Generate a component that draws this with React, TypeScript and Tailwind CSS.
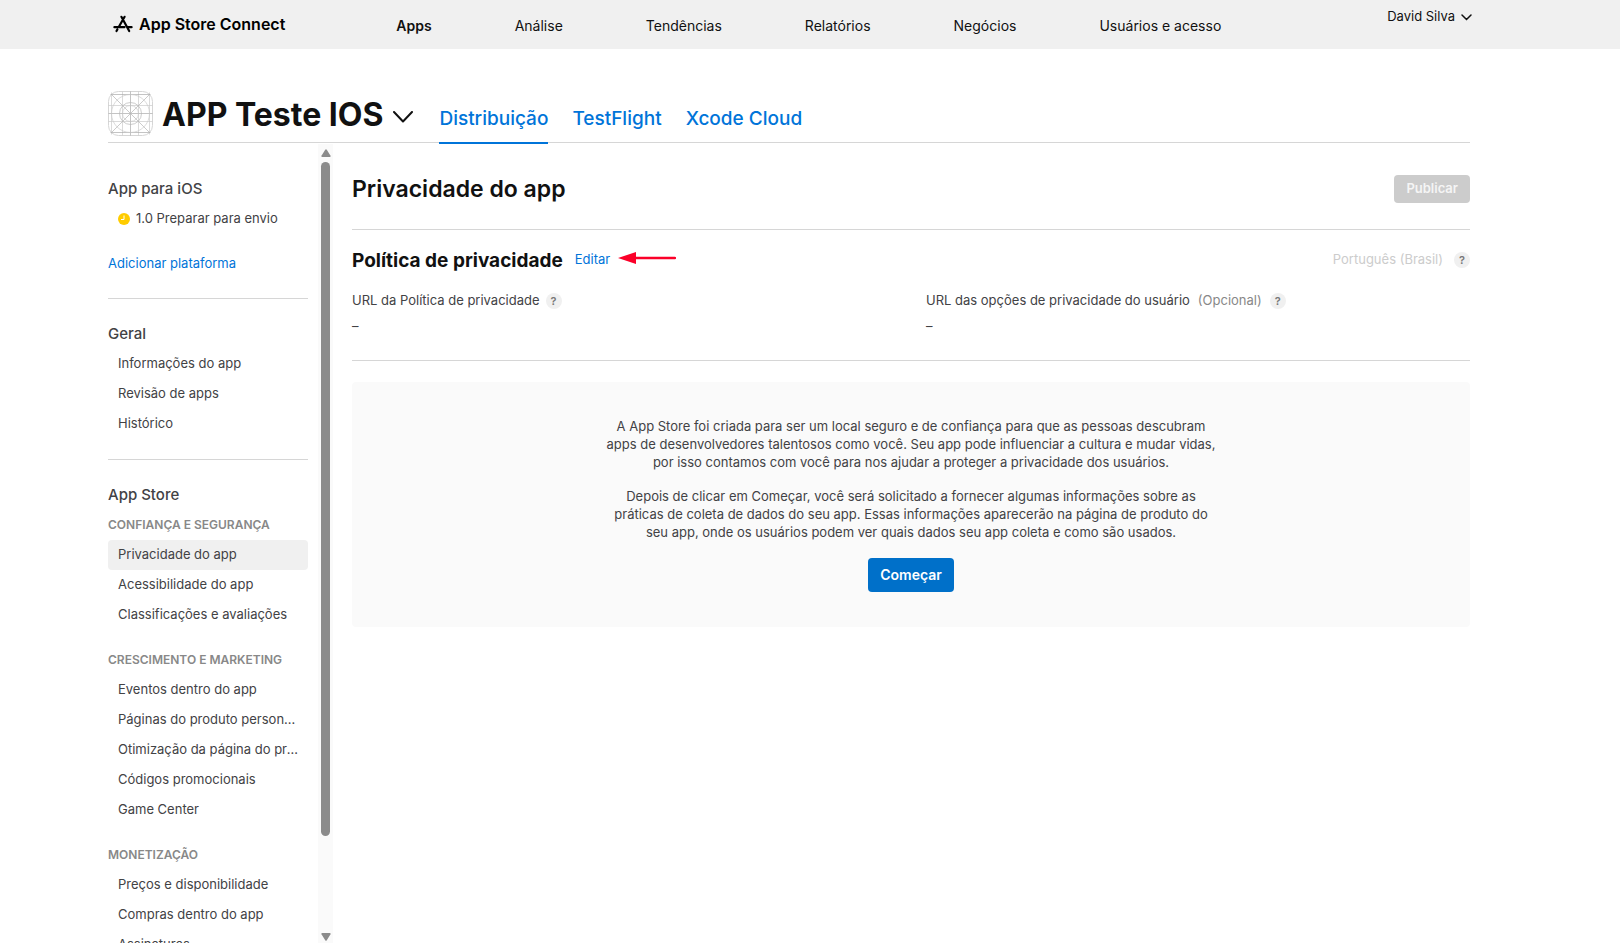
import React, { useState } from "react";

interface NavGroup {
  title: string;
  items: string[];
}

const topLinks = [
  "Apps",
  "Análise",
  "Tendências",
  "Relatórios",
  "Negócios",
  "Usuários e acesso",
];

const tabs = ["Distribuição", "TestFlight", "Xcode Cloud"];

const generalItems = ["Informações do app", "Revisão de apps", "Histórico"];

const storeGroups: NavGroup[] = [
  {
    title: "Confiança e segurança",
    items: [
      "Privacidade do app",
      "Acessibilidade do app",
      "Classificações e avaliações",
    ],
  },
  {
    title: "Crescimento e marketing",
    items: [
      "Eventos dentro do app",
      "Páginas do produto personalizadas",
      "Otimização da página do produto",
      "Códigos promocionais",
      "Game Center",
    ],
  },
  {
    title: "Monetização",
    items: ["Preços e disponibilidade", "Compras dentro do app", "Assinaturas"],
  },
];

const StoreLogo = () => (
  <svg
    viewBox="0 0 20 18"
    className="h-[18px] w-5"
    fill="none"
    stroke="#000"
    strokeWidth="2.2"
    strokeLinecap="round"
  >
    <path d="M11.6 1.8 5.6 12.2M8.4 1.8l7.8 14.2M1.4 12.2h10M15 12.2h3.6M4.4 14.4l-.9 1.6" />
  </svg>
);

const AppIcon = () => (
  <svg
    viewBox="0 0 45 45"
    className="size-[45px]"
    fill="none"
    stroke="#cccccc"
    strokeWidth="0.7"
  >
    <rect x="0.5" y="0.5" width="44" height="44" rx="10" stroke="#d6d6d6" strokeWidth="1" />
    <path d="M3.5 1.5v42M14.5 0.5v44M30.5 0.5v44M41.5 1.5v42M0.5 14.5h44M0.5 30.5h44" />
    <path d="M2.5 3.5h40M2.5 41.5h40M0.5 22.5h44M22.5 0.5v44" stroke="#ababab" />
    <path d="m3 3 39 39M42 3 3 42" stroke="#b5b5b5" />
    <circle cx="22.5" cy="22.5" r="19" />
    <circle cx="22.5" cy="22.5" r="11" stroke="#b8b8b8" />
    <circle cx="22.5" cy="22.5" r="8" />
  </svg>
);

const ClockIcon = () => (
  <svg viewBox="0 0 12 12" className="size-3" fill="none">
    <circle cx="6" cy="6" r="6" fill="#ffcc00" />
    <path d="M6 2.5V6.5H3" stroke="#fff" />
  </svg>
);

const HelpButton = ({ label }: { label: string }) => (
  <button
    type="button"
    aria-label={label}
    className="flex size-4 items-center justify-center rounded-full bg-[#f0f0f0] text-[11px] font-semibold text-[#777]"
  >
    ?
  </button>
);

interface SideItemProps {
  label: string;
  active?: boolean;
  onSelect: (label: string) => void;
}

const SideItem: React.FC<SideItemProps> = ({ label, active, onSelect }) => (
  <li>
    <a
      href="#"
      onClick={() => onSelect(label)}
      className={`block h-[30px] truncate rounded pr-2 pl-[10px] text-[13px] leading-[29px] text-[#424245] ${
        active ? "bg-[#f0f0f0]" : ""
      }`}
    >
      {label}
    </a>
  </li>
);

const ScrollRail = () => (
  <div className="mt-px ml-[10px] flex w-[15px] shrink-0 flex-col items-center bg-[#fafafa] pt-[5px] pb-[2px]">
    <svg viewBox="0 0 10 8" className="h-2 w-[10px]" fill="#8b8b8b">
      <path d="M4.2.8a1 1 0 0 1 1.6 0l3.4 5.4A1 1 0 0 1 8.4 8H1.6A1 1 0 0 1 .8 6.2z" />
    </svg>
    <div className="flex w-full flex-1 justify-center py-[5px]">
      <div className="h-[88%] w-[9px] rounded-full bg-[#8b8b8b]" />
    </div>
    <svg viewBox="0 0 10 8" className="h-2 w-[10px]" fill="#8b8b8b">
      <path d="M4.2 7.2a1 1 0 0 0 1.6 0l3.4-5.4A1 1 0 0 0 8.4 0H1.6A1 1 0 0 0 .8 1.8z" />
    </svg>
  </div>
);

const App = () => {
  const [current, setCurrent] = useState("Privacidade do app");
  const [tab, setTab] = useState("Distribuição");

  return (
    <div className="flex h-screen flex-col overflow-hidden bg-white font-['Inter','Liberation_Sans',sans-serif] text-[13px] text-[#424245]">
      <header className="flex h-[49px] shrink-0 bg-[#f0f0f0] pr-[148px] pl-[113px] text-[#111]">
        <a href="#" className="flex items-center gap-[6px] pb-[2px] text-base font-semibold text-black">
          <StoreLogo />
          App Store Connect
        </a>
        <nav className="ml-[111px] flex items-center gap-[83px] pt-[3px] text-sm">
          {topLinks.map((link, i) => (
            <a key={link} href="#" className={i === 0 ? "font-semibold" : ""}>
              {link}
            </a>
          ))}
        </nav>
        <button type="button" className="ml-auto flex items-center gap-[6px] pb-4">
          David Silva
          <svg viewBox="0 0 11 7" className="mt-[2px] h-[7px] w-[11px]" fill="none" stroke="#111" strokeWidth="1.5">
            <path d="m1 1 4.5 4.5L10 1" strokeLinecap="round" />
          </svg>
        </button>
      </header>

      <div className="flex min-h-0 flex-1 flex-col pr-[150px] pl-[108px]">
        <div className="flex h-[94px] shrink-0 items-end border-b border-[#d6d6d6]">
          <div className="mb-[6px]">
            <AppIcon />
          </div>
          <button
            type="button"
            className="mb-[7px] ml-[9px] flex items-center gap-[10px] text-[32px] leading-10 font-bold text-[#111]"
          >
            APP Teste IOS
            <svg viewBox="0 0 20 12" className="mt-1 h-3 w-5" fill="none" stroke="#111" strokeWidth="2">
              <path d="m1 1 9 9.5L19 1" strokeLinecap="round" strokeLinejoin="round" />
            </svg>
          </button>
          <nav className="-mb-[2px] ml-[26px] flex gap-6 text-[19px] leading-6 font-medium">
            {tabs.map((name) => (
              <a
                key={name}
                href="#"
                onClick={() => setTab(name)}
                className={`border-b-2 pb-[11px] text-[#0074d9] ${
                  tab === name ? "border-[#0074d9]" : "border-transparent"
                }`}
              >
                {name}
              </a>
            ))}
          </nav>
        </div>

        <div className="flex min-h-0 flex-1">
          <aside className="w-[200px] shrink-0 overflow-hidden pt-[31px]">
            <h3 className="text-[15px] leading-[30px] font-medium">App para iOS</h3>
            <a href="#" className="flex h-[30px] items-center gap-[6px] px-[10px]">
              <ClockIcon />
              1.0 Preparar para envio
            </a>
            <a href="#" className="mt-[14px] block leading-[30px] text-[#0074d9]">
              Adicionar plataforma
            </a>
            <hr className="mt-5 mb-5 border-[#d6d6d6]" />

            <h3 className="text-[15px] leading-[30px] font-medium">Geral</h3>
            <ul>
              {generalItems.map((item) => (
                <SideItem key={item} label={item} active={item === current} onSelect={setCurrent} />
              ))}
            </ul>
            <hr className="mt-5 mb-5 border-[#d6d6d6]" />

            <h3 className="text-[15px] leading-[30px] font-medium">App Store</h3>
            {storeGroups.map((group) => (
              <section key={group.title} className="mb-[15px]">
                <h4 className="text-xs leading-[30px] font-semibold whitespace-nowrap text-[#888] uppercase">
                  {group.title}
                </h4>
                <ul>
                  {group.items.map((item) => (
                    <SideItem key={item} label={item} active={item === current} onSelect={setCurrent} />
                  ))}
                </ul>
              </section>
            ))}
          </aside>
          <ScrollRail />

          <main className="ml-[19px] min-w-0 flex-1">
            <div className="flex h-[87px] items-center justify-between border-b border-[#d6d6d6] pt-[6px]">
              <h1 className="text-[23px] leading-8 font-semibold text-[#111]">Privacidade do app</h1>
              <button
                type="button"
                disabled
                className="h-7 rounded bg-[#ccc] px-3 font-semibold text-[#f5f5f5]"
              >
                Publicar
              </button>
            </div>

            <section className="border-b border-[#d6d6d6] pt-[18px] pb-[24px]">
              <div className="flex h-6 items-center">
                <h2 className="pt-[2px] text-[19px] leading-6 font-bold text-[#111]">
                  Política de privacidade
                </h2>
                <a href="#" className="ml-3 text-[#0074d9]">
                  Editar
                </a>
                <svg viewBox="0 0 58 12" className="mb-1 ml-2 h-3 w-[58px]">
                  <path d="M0 6 18 0v12z" fill="#fb0029" />
                  <path d="M17 6h40" stroke="#fb0029" strokeWidth="2.5" strokeLinecap="round" />
                </svg>
                <div className="ml-auto flex items-center gap-[11px] text-[#ccc]">
                  Português (Brasil)
                  <HelpButton label="Ajuda sobre idiomas" />
                </div>
              </div>
              <dl className="mt-[19px] grid grid-cols-2 gap-[30px]">
                <div>
                  <dt className="flex h-5 items-center gap-[6px]">
                    URL da Política de privacidade
                    <HelpButton label="Ajuda sobre a URL da política" />
                  </dt>
                  <dd className="mt-[5px] leading-5">–</dd>
                </div>
                <div>
                  <dt className="flex h-5 items-center gap-2">
                    URL das opções de privacidade do usuário
                    <span className="text-[#888]">(Opcional)</span>
                    <HelpButton label="Ajuda sobre a URL das opções" />
                  </dt>
                  <dd className="mt-[5px] leading-5">–</dd>
                </div>
              </dl>
            </section>

            <section className="mt-[21px] flex flex-col items-center rounded bg-[#fafafa] py-[35px] text-center leading-[18px]">
              <p className="max-w-[612px]">
                A App Store foi criada para ser um local seguro e de confiança para que as pessoas
                descubram apps de desenvolvedores talentosos como você. Seu app pode influenciar a
                cultura e mudar vidas, por isso contamos com você para nos ajudar a proteger a
                privacidade dos usuários.
              </p>
              <p className="mt-4 max-w-[612px]">
                Depois de clicar em Começar, você será solicitado a fornecer algumas informações
                sobre as práticas de coleta de dados do seu app. Essas informações aparecerão na
                página de produto do seu app, onde os usuários podem ver quais dados seu app coleta
                e como são usados.
              </p>
              <button
                type="button"
                className="mt-[17px] h-[34px] rounded bg-[#0070c9] px-3 text-sm font-semibold text-white"
              >
                Começar
              </button>
            </section>
          </main>
        </div>
      </div>
    </div>
  );
};

export default App;
